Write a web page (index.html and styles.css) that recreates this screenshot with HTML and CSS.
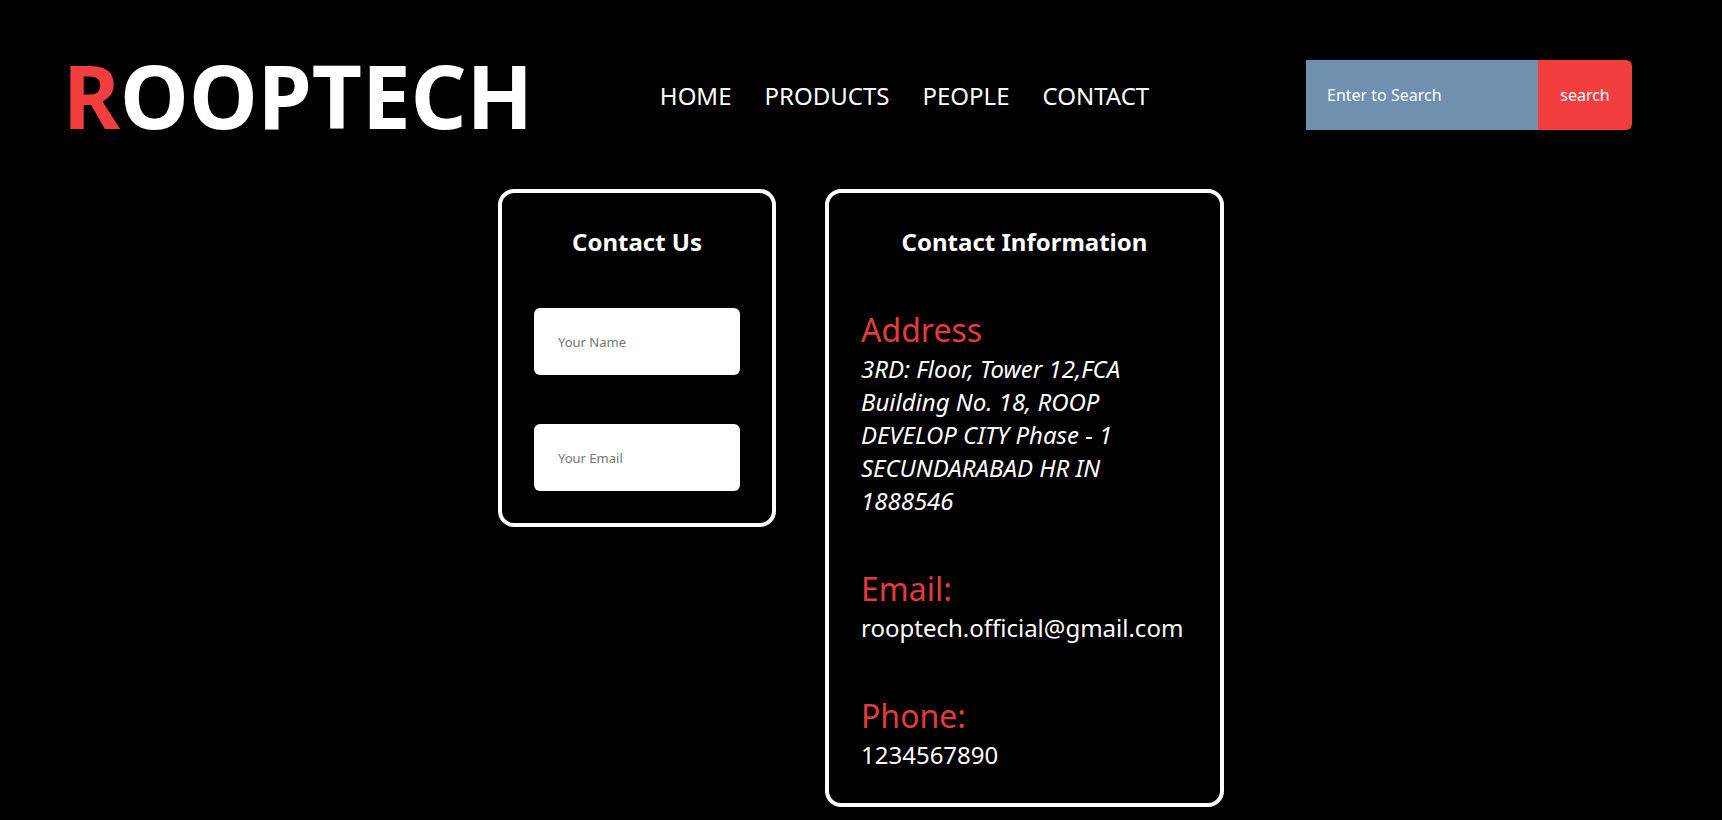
FILE: index.html
```html
<!DOCTYPE html>
<html lang="en">
<head>
<meta charset="utf-8">
<title>Rooptech - Contact</title>
<link rel="stylesheet" href="styles.css">
</head>
<body>
<header class="header">
  <h1 class="logo"><span class="logo-accent">R</span>OOPTECH</h1>
  <nav class="nav">
    <a class="nav-link" href="#">HOME</a>
    <a class="nav-link" href="#">PRODUCTS</a>
    <a class="nav-link" href="#">PEOPLE</a>
    <a class="nav-link" href="#">CONTACT</a>
  </nav>
  <form class="search">
    <input class="search-input" type="text" placeholder="Enter to Search" aria-label="Enter to Search">
    <button class="search-button" type="button">search</button>
  </form>
</header>
<main class="cards">
  <form class="card contact-form">
    <h2 class="card-title">Contact Us</h2>
    <div class="fields">
      <input class="field" type="text" placeholder="Your Name" aria-label="Your Name">
      <input class="field" type="email" placeholder="Your Email" aria-label="Your Email">
    </div>
  </form>
  <section class="card contact-info">
    <h2 class="card-title">Contact Information</h2>
    <div class="details">
      <div class="detail">
        <h3 class="detail-title">Address</h3>
        <address class="address">3RD: Floor, Tower 12,FCA<br>Building No. 18, ROOP<br>DEVELOP CITY Phase - 1<br>SECUNDARABAD HR IN<br>1888546</address>
      </div>
      <div class="detail">
        <h3 class="detail-title">Email:</h3>
        <a class="detail-link" href="mailto:rooptech.official@gmail.com">rooptech.official@gmail.com</a>
      </div>
      <div class="detail">
        <h3 class="detail-title">Phone:</h3>
        <a class="detail-link" href="tel:1234567890">1234567890</a>
      </div>
    </div>
  </section>
</main>
</body>
</html>
```
FILE: styles.css
```css
* {
  box-sizing: border-box;
  margin: 0;
  padding: 0;
}

body {
  background: #000;
  color: #fff;
  font-family: "Noto Sans", sans-serif;
  font-size: 24px;
  line-height: 33px;
}

a {
  color: inherit;
  text-decoration: none;
}

.header {
  display: flex;
  align-items: center;
  justify-content: space-between;
  padding: 36px 90px 35px 63px;
}

.logo {
  font-size: 87px;
  line-height: 118px;
}

.logo-accent {
  color: #f23e3e;
}

.nav {
  display: flex;
  gap: 33px;
  margin-right: 30px;
}

.search {
  display: flex;
}

.search-input {
  width: 232px;
  height: 70px;
  padding: 0 21px;
  border: 0;
  background: #7090af;
  color: #fff;
  font: inherit;
  font-size: 16px;
}

.search-input::placeholder {
  color: #fff;
}

.search-button {
  width: 94px;
  border: 0;
  border-radius: 0 6px 6px 0;
  background: #f23e3e;
  color: #fff;
  font: inherit;
  font-size: 16px;
}

.cards {
  display: flex;
  justify-content: center;
  align-items: flex-start;
  gap: 49px;
  padding-bottom: 11px;
}

.card {
  padding: 32px;
  border: 4px solid #fff;
  border-radius: 16px;
}

.contact-info {
  min-width: 399px;
}

.card-title {
  margin-bottom: 49px;
  font-size: 24px;
  line-height: 34px;
  text-align: center;
}

.fields {
  display: flex;
  flex-direction: column;
  gap: 49px;
}

.field {
  width: 206px;
  height: 67px;
  padding: 0 24px;
  border: 0;
  border-radius: 6px;
  background: #fff;
  color: #000;
  font: inherit;
  font-size: 13px;
}

.field::placeholder {
  color: #757575;
}

.details {
  display: flex;
  flex-direction: column;
  gap: 50px;
}

.detail-title {
  color: #e03c3c;
  font-size: 32px;
  font-weight: 400;
  line-height: 44px;
}

.detail-link {
  display: block;
}
```
